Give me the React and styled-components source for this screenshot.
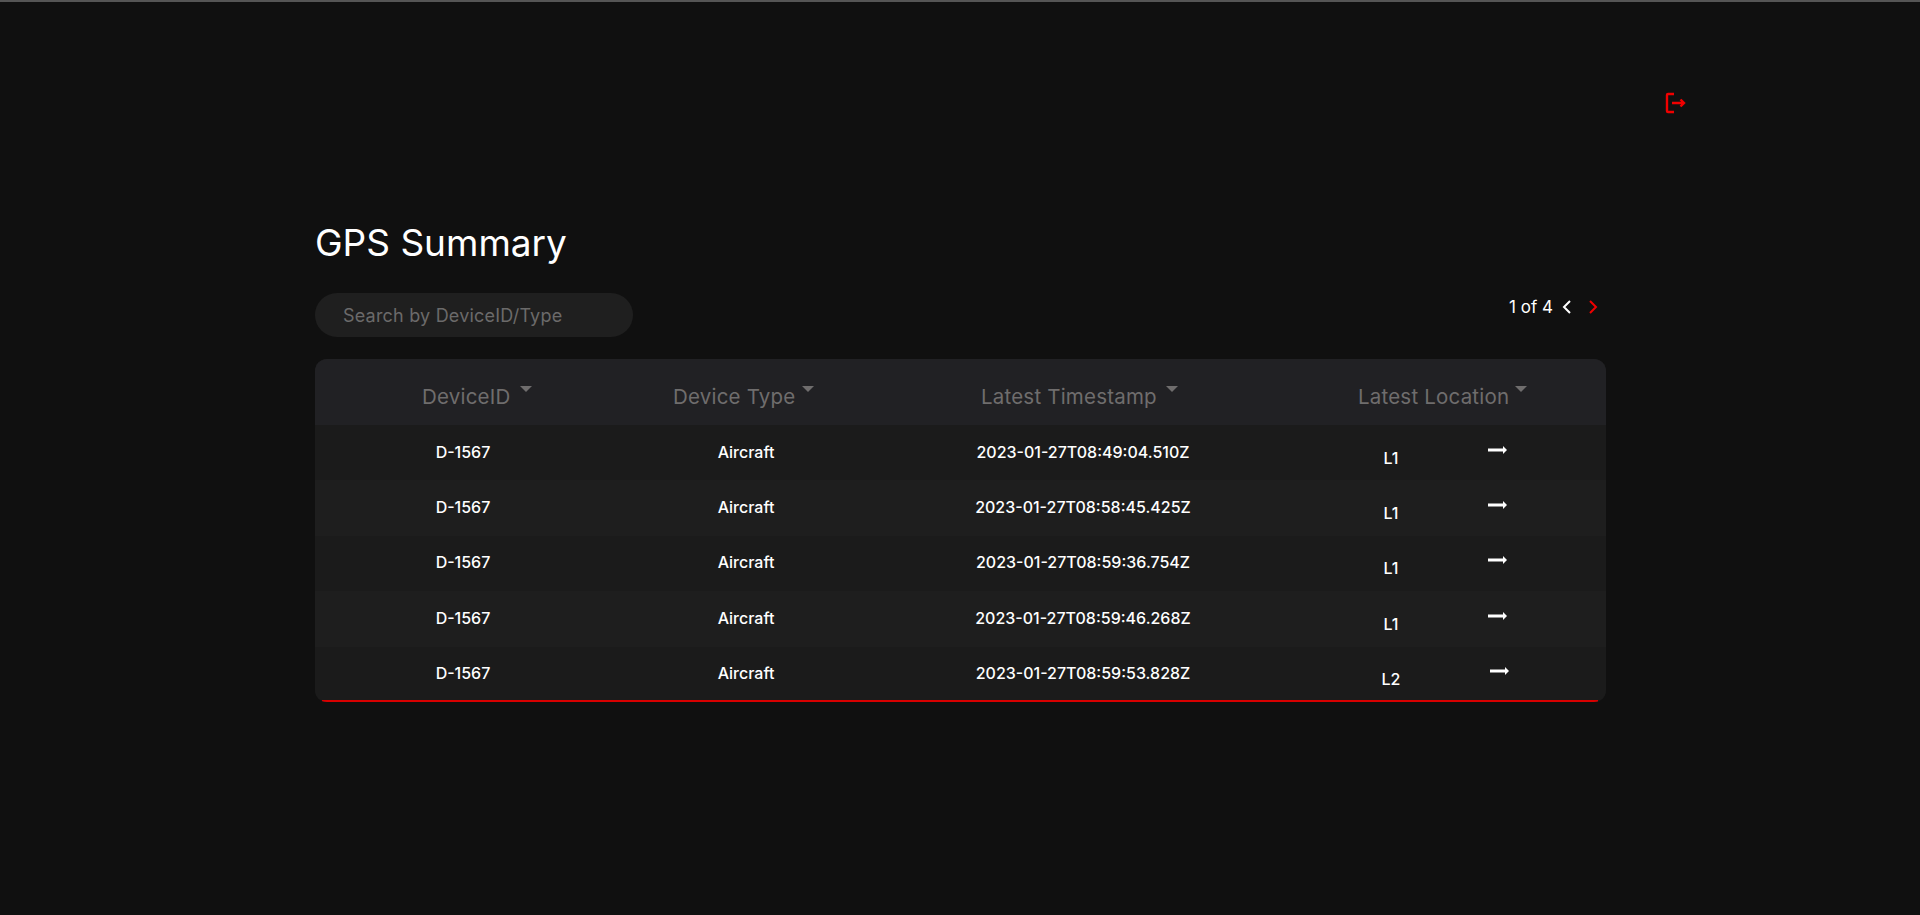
import React from "react";
import styled, { createGlobalStyle } from "styled-components";

const rows = [
  { id: "D-1567", type: "Aircraft", time: "2023-01-27T08:49:04.510Z", loc: "L1" },
  { id: "D-1567", type: "Aircraft", time: "2023-01-27T08:58:45.425Z", loc: "L1" },
  { id: "D-1567", type: "Aircraft", time: "2023-01-27T08:59:36.754Z", loc: "L1" },
  { id: "D-1567", type: "Aircraft", time: "2023-01-27T08:59:46.268Z", loc: "L1" },
  { id: "D-1567", type: "Aircraft", time: "2023-01-27T08:59:53.828Z", loc: "L2" },
];

const columns = [
  { label: "DeviceID", inset: 107, gap: 10 },
  { label: "Device Type", inset: 62, gap: 7 },
  { label: "Latest Timestamp", inset: 100, gap: 9 },
  { label: "Latest Location", inset: 73, gap: 6 },
];

const Global = createGlobalStyle`
  html, body {
    margin: 0;
    background: #101010;
    font-family: Inter, "Liberation Sans", sans-serif;
  }
`;

const Page = styled.div`
  height: 915px;
  box-sizing: border-box;
  border-top: 2px solid #555;
  background: #101010;
  overflow: hidden;
`;

const TopBar = styled.div`
  display: flex;
  justify-content: flex-end;
  padding: 90px 234px 0 0;
  height: 129px;
`;

const LogoutButton = styled.button`
  display: flex;
  width: 22px;
  height: 22px;
  padding: 0;
  border: 0;
  background: none;
`;

const Main = styled.main`
  width: 1291px;
  margin-left: 315px;
`;

const Title = styled.h1`
  margin: 0;
  height: 44px;
  font-size: 37px;
  line-height: 44px;
  font-weight: 400;
  color: #fff;
`;

const Controls = styled.div`
  display: flex;
  justify-content: space-between;
  margin-top: 28px;
  height: 66px;
`;

const Search = styled.input`
  box-sizing: border-box;
  width: 318px;
  height: 44px;
  padding: 0 28px;
  border: 0;
  border-radius: 22px;
  outline: none;
  background: #1f1f1f;
  color: #fff;
  font: 400 18px Inter, "Liberation Sans", sans-serif;
  letter-spacing: 0.2px;

  &::placeholder {
    color: #6b6a6a;
    opacity: 1;
  }
`;

const Pager = styled.div`
  display: flex;
  align-items: center;
  height: 26px;
  margin: 1px 8px 0 0;
  color: #fff;
  font-size: 17px;
`;

const PagerText = styled.span`
  margin-right: 9px;
`;

const PagerButton = styled.button`
  display: flex;
  width: 9px;
  height: 14px;
  padding: 0;
  margin-left: ${(p) => p.$offset}px;
  border: 0;
  background: none;
  color: ${(p) => p.$color};
`;

const Table = styled.div`
  position: relative;
  border-radius: 12px;
  overflow: hidden;
  background: #1c1c1c;

  &::after {
    content: "";
    position: absolute;
    left: 7px;
    right: 8px;
    bottom: 0;
    height: 2px;
    background: #d80000;
  }
`;

const Row = styled.div`
  display: grid;
  grid-template-columns: 296px 270px 404px 321px;
  align-items: center;
  height: 55.4px;
  padding-bottom: 2px;
  box-sizing: border-box;
  background: ${(p) => (p.$alt ? "#1e1e1e" : "#1b1b1b")};
`;

const HeadRow = styled(Row)`
  height: 66px;
  padding-bottom: 0;
  background: #212124;
`;

const HeadCell = styled.div`
  display: flex;
  align-items: flex-start;
  padding: 10px 0 0 ${(p) => p.$inset}px;
  color: #6f6d6d;
  font-size: 20.5px;
  letter-spacing: 0.2px;
  line-height: 28px;
`;

const Caret = styled.span`
  width: 0;
  height: 0;
  margin: 3px 0 0 ${(p) => p.$gap}px;
  border-left: 6px solid transparent;
  border-right: 6px solid transparent;
  border-top: 6px solid #6f6d6d;
`;

const Cell = styled.div`
  text-align: center;
  color: #fff;
  font-size: 16px;
  font-weight: 500;
`;

const LocationCell = styled(Cell)`
  display: flex;
  justify-content: center;
  align-items: center;
  gap: 90px;
`;

const LocationText = styled.span`
  transform: translateY(6px);
`;

const GoButton = styled.button`
  display: flex;
  width: 19px;
  height: 10px;
  padding: 0;
  border: 0;
  background: none;
  transform: translateY(-2px);
`;

const LogoutIcon = () => (
  <svg width="22" height="22" viewBox="0 0 22 22" fill="none" stroke="#f00000" strokeWidth="2.4">
    <path d="M10 2H4a1 1 0 0 0-1 1v16a1 1 0 0 0 1 1h6" />
    <path d="M8 11h12M16.500 7.500 20 11l-3.500 3.500" />
  </svg>
);

const Chevron = ({ left }) => (
  <svg width="9" height="14" viewBox="0 0 9 14" fill="none" stroke="currentColor" strokeWidth="2">
    <path d={left ? "M8 1 2 7l6 6" : "M1 1l6 6-6 6"} />
  </svg>
);

const ArrowIcon = () => (
  <svg width="19" height="10" viewBox="0 0 19 10" fill="#fff">
    <path d="M0 3.500h15V1l4 4-4 4V6.500H0z" />
  </svg>
);

export default function App() {
  return (
    <Page>
      <Global />
      <TopBar>
        <LogoutButton>
          <LogoutIcon />
        </LogoutButton>
      </TopBar>
      <Main>
        <Title>GPS Summary</Title>
        <Controls>
          <Search placeholder="Search by DeviceID/Type" />
          <Pager>
            <PagerText>1 of 4</PagerText>
            <PagerButton $color="#fff" $offset={0}>
              <Chevron left />
            </PagerButton>
            <PagerButton $color="#f00000" $offset={18}>
              <Chevron />
            </PagerButton>
          </Pager>
        </Controls>
        <Table>
          <HeadRow>
            {columns.map((c) => (
              <HeadCell key={c.label} $inset={c.inset}>
                {c.label}
                <Caret $gap={c.gap} />
              </HeadCell>
            ))}
          </HeadRow>
          {rows.map((r, i) => (
            <Row key={r.time} $alt={i % 2 === 1}>
              <Cell>{r.id}</Cell>
              <Cell>{r.type}</Cell>
              <Cell>{r.time}</Cell>
              <LocationCell>
                <LocationText>{r.loc}</LocationText>
                <GoButton>
                  <ArrowIcon />
                </GoButton>
              </LocationCell>
            </Row>
          ))}
        </Table>
      </Main>
    </Page>
  );
}
